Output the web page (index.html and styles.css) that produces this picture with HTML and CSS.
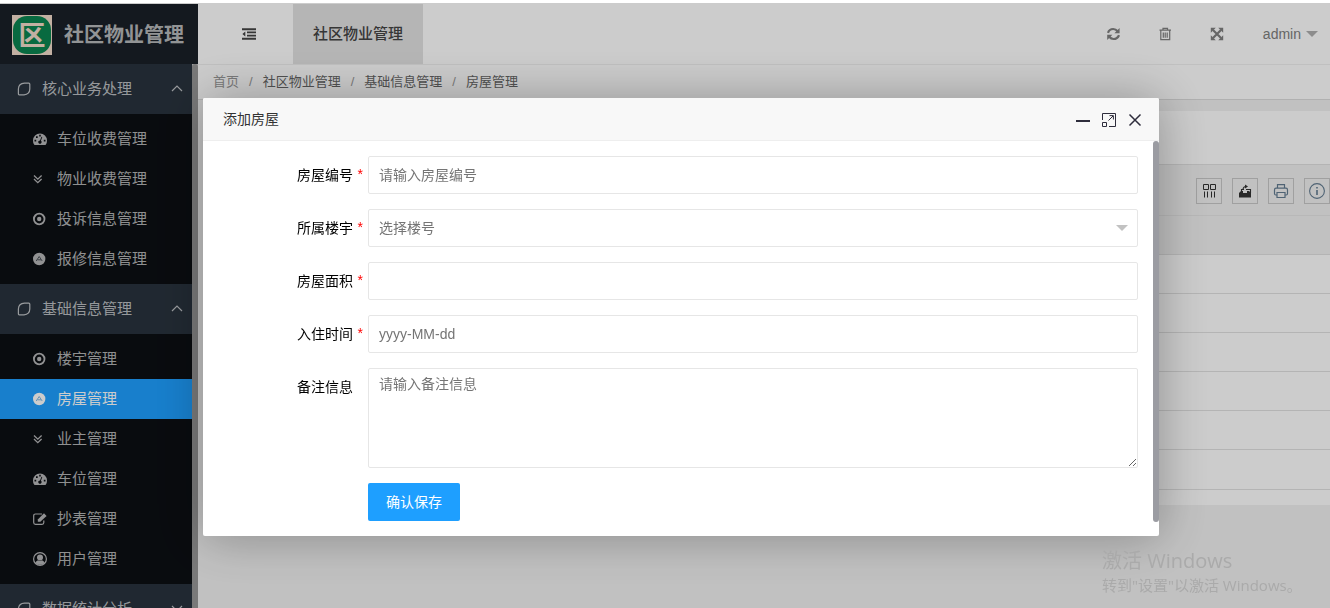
FILE: index.html
```html
<!DOCTYPE html>
<html lang="zh-CN">
<head>
<meta charset="utf-8">
<title>社区物业管理</title>
<link rel="stylesheet" href="styles.css">
</head>
<body>
<svg class="sprite" aria-hidden="true">
  <symbol id="leaf" viewBox="0 0 14 14"><path d="M2.200 12.800Q1.400 12.800 1.400 12V7Q1.600 1.500 7.500 1.200H11.800Q12.800 1.200 12.800 2.200V7Q12.600 12.500 7 12.800Z" fill="none" stroke="currentColor" stroke-width="1.200"/></symbol>
  <symbol id="up" viewBox="0 0 12 8"><path d="M1 6L6 1L11 6" fill="none" stroke="currentColor" stroke-width="1.200"/></symbol>
  <symbol id="down" viewBox="0 0 12 8"><path d="M1 1L6 6L11 1" fill="none" stroke="currentColor" stroke-width="1.200"/></symbol>
  <symbol id="gauge" viewBox="0 0 14 14"><path fill="currentColor" fill-rule="evenodd" d="M7 1.500A7 7 0 0 0 0 8.500Q0 11 1.100 12.600Q1.300 13 1.700 13H12.300Q12.700 13 12.900 12.600Q14 11 14 8.500A7 7 0 0 0 7 1.500ZM1.500 7.800h1.700v1.700H1.500ZM3 4.200h1.700v1.700H3ZM6.200 2.700h1.600v1.700H6.200ZM10.800 7.800h1.700v1.700h-1.700ZM8.500 4.700L9.300 5L7.900 8.700A1.700 1.700 0 1 1 7 8.400Z"/></symbol>
  <symbol id="dbl" viewBox="0 0 14 14"><path d="M1 3.500L4.800 7.200L8.600 3.500M1 7L4.800 10.700L8.600 7" fill="none" stroke="currentColor" stroke-width="1.300"/></symbol>
  <symbol id="dot" viewBox="0 0 14 14"><circle cx="6.200" cy="7" r="5.300" fill="none" stroke="currentColor" stroke-width="1.800"/><circle cx="6.200" cy="7" r="2.200" fill="currentColor"/></symbol>
  <symbol id="disc" viewBox="0 0 14 14"><circle cx="6.200" cy="7" r="6.200" fill="currentColor"/><path d="M3.200 9L6.200 4.500L9.200 9M4.400 7.800H8" fill="none" stroke="#4b5258" stroke-width="1"/></symbol>
  <symbol id="disc-on" viewBox="0 0 14 14"><circle cx="6.200" cy="7" r="6.200" fill="currentColor"/><path d="M3.200 9L6.200 4.500L9.200 9M4.400 7.800H8" fill="none" stroke="#7fb9e4" stroke-width="1"/></symbol>
  <symbol id="edit" viewBox="0 0 14 14"><path d="M9 2H2.500Q.7 2 .7 3.800V10.500Q.7 12.300 2.500 12.300H9Q10.800 12.300 10.800 10.500V8.500" fill="none" stroke="currentColor" stroke-width="1.200"/><path d="M4.800 9.800V7.400L11 1.300L13.600 3.900L7.300 9.800Z" fill="currentColor"/></symbol>
  <symbol id="user" viewBox="0 0 14 14"><circle cx="7" cy="7" r="6.400" fill="none" stroke="currentColor" stroke-width="1.200"/><circle cx="7" cy="5.400" r="3" fill="currentColor"/><path d="M2.400 11Q3 8.600 5 8.200Q7 9.500 9 8.200Q11 8.600 11.600 11Q7 14.500 2.400 11Z" fill="currentColor"/></symbol>
  <symbol id="indent" viewBox="0 0 14 14"><path d="M0 2.200H14M5 5.400H14M5 8.600H14M0 11.800H14" stroke="currentColor" stroke-width="1.900"/><path d="M3.300 4.500V9.500L.4 7Z" fill="currentColor"/></symbol>
  <symbol id="refresh" viewBox="0 0 14 14"><path d="M2 5.800Q3.200 2 7.200 2Q9.800 2 11.600 4.200M13 8.200Q11.500 12 7.500 12Q5 12 3.200 9.800" fill="none" stroke="currentColor" stroke-width="2.200"/><path d="M13.600 1V6.200H8.400ZM1.200 13V7.800H6.400Z" fill="currentColor"/></symbol>
  <symbol id="trash" viewBox="0 0 14 14"><path d="M1.500 3.200H13M5 3V1.300H9.500V3M2.800 3.500V12.600H11.700V3.500M5.300 5.500V10.800M7.200 5.500V10.800M9.200 5.500V10.800" fill="none" stroke="currentColor" stroke-width="1.200"/></symbol>
  <symbol id="arrows" viewBox="0 0 14 14"><path d="M3 3L11 11M11 3L3 11" stroke="currentColor" stroke-width="2.200"/><path d="M.8 .8H5.800L.8 5.800ZM13.200 .8V5.800L8.200 .8ZM.8 13.200V8.200L5.800 13.200ZM13.200 13.200H8.200L13.200 8.200Z" fill="currentColor"/></symbol>
  <symbol id="caret" viewBox="0 0 12 6"><path d="M0 0H12L6 6Z" fill="currentColor"/></symbol>
  <symbol id="min" viewBox="0 0 14 14"><path d="M0 8H14" stroke="currentColor" stroke-width="2"/></symbol>
  <symbol id="max" viewBox="0 0 14 14"><path d="M.5 7V.5H13.500V13.500H7M.5 9.500H4.500V13.500H.5ZM6.500 7.500L11 3M7.500 2.600H11.400V6.500" fill="none" stroke="currentColor" stroke-width="1"/></symbol>
  <symbol id="close" viewBox="0 0 14 14"><path d="M1.500 1.500L12.500 12.500M12.500 1.500L1.500 12.500" stroke="currentColor" stroke-width="1.500"/></symbol>
  <symbol id="cols" viewBox="0 0 16 16"><path d="M2.500 1.500H7.500V6.500H2.500ZM9.500 1.500H14.500V6.500H9.500ZM3.500 8.500V14.500M6.500 8.500V14.500M10.500 8.500V14.500M13.500 8.500V14.500" fill="none" stroke="currentColor" stroke-width="1"/></symbol>
  <symbol id="export" viewBox="0 0 16 16"><path d="M2 10H14V14.500H2ZM2 10L4 8H6V10ZM10 10V8H12L14 10Z" fill="currentColor"/><path d="M4.500 9.500V6.500H7M9 6.500H13.500V10M6 6Q6.500 3.500 9 3.500" fill="none" stroke="currentColor" stroke-width="1.100"/><path d="M8 1.500L11 3.500L8 5.500Z" fill="currentColor"/></symbol>
  <symbol id="print" viewBox="0 0 16 16"><path d="M4.500 5V1.700H11.500V5M4 12H2.800Q1.500 12 1.500 10.500V7Q1.500 5.200 3 5.200H13Q14.500 5.200 14.500 7V10.500Q14.500 12 13.200 12H12M4 9.500H12V14.500H4Z" fill="none" stroke="currentColor" stroke-width="1.200"/></symbol>
  <symbol id="info" viewBox="0 0 16 16"><circle cx="8" cy="8" r="7.400" fill="none" stroke="currentColor" stroke-width="1.100"/><path d="M8 4V5.600M8 7V12" stroke="currentColor" stroke-width="1.600"/></symbol>
</svg>

<div class="app">
  <nav class="side">
    <div class="brand">
      <svg class="brand-logo" viewBox="0 0 40 40" aria-hidden="true">
        <rect width="40" height="40" fill="#f3dccb"/>
        <rect x="1" y="1" width="38" height="38" rx="14" fill="#0b8550"/>
        <text class="seal" x="20" y="30" text-anchor="middle">区</text>
      </svg>
      <h1 class="brand-name">社区物业管理</h1>
    </div>
    <div class="menu-wrap">
      <div class="menu">
        <button class="group"><svg class="i14"><use href="#leaf"/></svg><span>核心业务处理</span><svg class="chev"><use href="#up"/></svg></button>
        <div class="items">
          <a href="#"><svg class="i14"><use href="#gauge"/></svg>车位收费管理</a>
          <a href="#"><svg class="i14"><use href="#dbl"/></svg>物业收费管理</a>
          <a href="#"><svg class="i14"><use href="#dot"/></svg>投诉信息管理</a>
          <a href="#"><svg class="i14"><use href="#disc"/></svg>报修信息管理</a>
        </div>
        <button class="group"><svg class="i14"><use href="#leaf"/></svg><span>基础信息管理</span><svg class="chev"><use href="#up"/></svg></button>
        <div class="items">
          <a href="#"><svg class="i14"><use href="#dot"/></svg>楼宇管理</a>
          <a href="#" class="on"><svg class="i14"><use href="#disc-on"/></svg>房屋管理</a>
          <a href="#"><svg class="i14"><use href="#dbl"/></svg>业主管理</a>
          <a href="#"><svg class="i14"><use href="#gauge"/></svg>车位管理</a>
          <a href="#"><svg class="i14"><use href="#edit"/></svg>抄表管理</a>
          <a href="#"><svg class="i14"><use href="#user"/></svg>用户管理</a>
        </div>
        <button class="group"><svg class="i14"><use href="#leaf"/></svg><span>数据统计分析</span><svg class="chev"><use href="#down"/></svg></button>
      </div>
      <div class="side-bar"></div>
    </div>
  </nav>

  <main class="main">
    <header class="top">
      <button class="fold" aria-label="收起菜单"><svg class="i14"><use href="#indent"/></svg></button>
      <a class="tab" href="#">社区物业管理</a>
      <div class="tools">
        <button aria-label="刷新"><svg class="i14"><use href="#refresh"/></svg></button>
        <button aria-label="清理"><svg class="i14"><use href="#trash"/></svg></button>
        <button aria-label="全屏"><svg class="i14"><use href="#arrows"/></svg></button>
      </div>
      <button class="account">admin<svg class="caret"><use href="#caret"/></svg></button>
    </header>
    <div class="crumbs">
      <a class="home" href="#">首页</a><span>/</span><a href="#">社区物业管理</a><span>/</span><a href="#">基础信息管理</a><span>/</span><a href="#">房屋管理</a>
    </div>
    <div class="content">
      <div class="filter"></div>
      <div class="toolbar">
        <button aria-label="筛选列"><svg class="i16"><use href="#cols"/></svg></button>
        <button aria-label="导出"><svg class="i16"><use href="#export"/></svg></button>
        <button class="blue" aria-label="打印"><svg class="i16"><use href="#print"/></svg></button>
        <button class="blue" aria-label="提示"><svg class="i16"><use href="#info"/></svg></button>
      </div>
      <table class="grid">
        <thead><tr><th></th></tr></thead>
        <tbody><tr><td></td></tr><tr><td></td></tr><tr><td></td></tr><tr><td></td></tr><tr><td></td></tr><tr><td></td></tr></tbody>
      </table>
    </div>
  </main>
</div>

<div class="shade"></div>

<section class="dialog" role="dialog" aria-labelledby="dlg-title">
  <div class="dialog-head">
    <h2 id="dlg-title">添加房屋</h2>
    <button aria-label="最小化"><svg class="i14"><use href="#min"/></svg></button>
    <button aria-label="最大化"><svg class="i14"><use href="#max"/></svg></button>
    <button aria-label="关闭"><svg class="i14"><use href="#close"/></svg></button>
  </div>
  <div class="dialog-body">
    <form class="form">
      <div class="row"><label for="no">房屋编号</label><b>*</b><input id="no" type="text" placeholder="请输入房屋编号"></div>
      <div class="row"><label for="building">所属楼宇</label><b>*</b><div class="pick"><select id="building"><option>选择楼号</option></select><svg class="caret"><use href="#caret"/></svg></div></div>
      <div class="row"><label for="area">房屋面积</label><b>*</b><input id="area" type="text"></div>
      <div class="row"><label for="date">入住时间</label><b>*</b><input id="date" type="text" placeholder="yyyy-MM-dd"></div>
      <div class="row"><label for="note">备注信息</label><b></b><textarea id="note" placeholder="请输入备注信息"></textarea></div>
      <div class="row"><button class="save" type="button">确认保存</button></div>
    </form>
    <div class="dialog-bar"></div>
  </div>
</section>

<div class="notice"><p class="notice-title">激活 Windows</p><p>转到"设置"以激活 Windows。</p></div>
</body>
</html>
```
FILE: styles.css
```css
* { box-sizing: border-box; }
body {
  margin: 0;
  font: 14px/20px "Liberation Sans", "Noto Sans CJK SC", sans-serif;
  color: #333;
  background: #f2f2f2;
}
h1, h2, p { margin: 0; }
a { color: inherit; text-decoration: none; }
button { border: 0; padding: 0; background: none; font: inherit; color: inherit; cursor: pointer; }
svg { display: block; flex: none; }
.sprite { position: absolute; width: 0; height: 0; }
.i14 { width: 14px; height: 14px; }
.i16 { width: 16px; height: 16px; }
.caret { width: 12px; height: 6px; }

.app { display: flex; height: 100vh; overflow: hidden; border-top: 4px solid #fff; }

/* sidebar */
.side { display: flex; flex-direction: column; flex: none; width: 198px; background: #0c0f13; color: rgba(255, 255, 255, .7); }
.brand { display: flex; align-items: center; gap: 12px; flex: none; height: 60px; padding: 2px 0 0 12px; background: #192027; }
.brand-logo { width: 40px; height: 40px; }
.seal { font: 700 27px "Noto Sans CJK SC", sans-serif; fill: #f3dccb; }
.brand-name { font-size: 20px; line-height: 28px; font-weight: bold; white-space: nowrap; }
.menu-wrap { display: flex; flex: 1; min-height: 0; background: #c8c8c8; }
.menu { flex: 1; overflow: hidden; background: #0c0f13; font-size: 15px; }
.side-bar { width: 6px; border-radius: 3px 3px 0 0; background: #989898; }
.group { display: flex; align-items: center; gap: 11px; width: 100%; height: 50px; padding: 0 9px 0 17px; background: #29333e; text-align: left; }
.group span { flex: 1; }
.chev { width: 12px; height: 8px; }
.items { padding: 5px 0; }
.items a { display: flex; align-items: center; gap: 10px; height: 40px; padding-left: 33px; }
.items .on { background: #1e9fff; color: #fff; }

/* page header */
.main { flex: 1; min-width: 0; }
.top { display: flex; height: 61px; border-bottom: 1px solid #f0f0f0; background: #fff; color: #808080; }
.fold { display: flex; align-items: center; width: 95px; padding-left: 44px; color: #444; }
.tab { display: flex; align-items: center; padding: 0 20px; background: #e3e3e3; color: #444; font-size: 15px; font-weight: 500; }
.tools { display: flex; margin-left: auto; }
.tools button { display: flex; align-items: center; justify-content: center; width: 52px; }
.account { display: flex; align-items: center; gap: 5px; padding: 0 12px 0 20px; }
.account .caret { color: #b0b0b0; }
.crumbs { display: flex; align-items: center; gap: 10px; height: 35px; padding-left: 15px; border-bottom: 1px solid #dcdcdc; background: #fff; color: #666; font-size: 13px; }
.crumbs .home, .crumbs span { color: #999; }

/* list page */
.content { padding: 11px 0 0 10px; }
.filter { height: 54px; border-bottom: 1px solid #e2e2e2; background: #fff; }
.toolbar { display: flex; justify-content: flex-end; align-items: center; gap: 10px; height: 51px; padding-top: 2px; border-bottom: 1px solid #e6e6e6; }
.toolbar button { display: flex; align-items: center; justify-content: center; width: 26px; height: 26px; border: 1px solid #c8c8c8; color: #333; }
.toolbar .blue { color: #637c91; }
.grid { width: 100%; border-collapse: separate; border-spacing: 0; border-bottom: 15px solid #fff; }
.grid th, .grid td { height: 39px; padding: 0; border-bottom: 1px solid #e2e2e2; }
.grid td { background: #fff; }
.grid tr:last-child td { height: 40px; }

.shade { position: fixed; inset: 3px 0 0; background: rgba(0, 0, 0, .2); }

/* dialog */
.dialog { position: fixed; top: 98px; left: 203px; right: 171px; border-radius: 2px; background: #fff; box-shadow: 1px 1px 50px rgba(0, 0, 0, .3); }
.dialog-head { display: flex; align-items: center; height: 43px; padding: 0 11px 0 20px; border-bottom: 1px solid #eee; border-radius: 2px 2px 0 0; background: #f8f8f8; }
.dialog-head h2 { flex: 1; font-size: 14px; font-weight: normal; }
.dialog-head button { display: flex; align-items: center; justify-content: center; width: 26px; height: 28px; padding-top: 2px; color: #2e2d3c; }
.dialog-body { display: flex; }
.dialog-bar { width: 6px; margin-bottom: 14px; border-radius: 3px; background: #9b9ca2; }
.form { display: flex; flex: 1; flex-direction: column; gap: 15px; padding: 15px; }
.row { display: grid; grid-template-columns: 135px 15px 1fr; }
.row label { padding-top: 9px; color: #000; text-align: right; }
.row b { padding: 8px 5px 0 0; color: #f00; font-weight: normal; text-align: right; }
.row input, .row select, .row textarea {
  display: block;
  width: 100%;
  height: 38px;
  margin: 0;
  padding: 0 10px;
  border: 1px solid #e6e6e6;
  border-radius: 2px;
  background: #fff;
  color: #757575;
  font: inherit;
}
.row ::placeholder { color: #757575; }
.row select { appearance: none; }
.row textarea { height: 100px; padding: 5px 10px; resize: vertical; }
.pick { display: grid; align-items: center; }
.pick > * { grid-area: 1 / 1; }
.pick .caret { justify-self: end; margin-right: 10px; color: #c2c2c2; pointer-events: none; }
.save { grid-column: 3; justify-self: start; height: 38px; padding: 0 18px; border-radius: 2px; background: #1e9fff; color: #fff; }

.notice { position: fixed; right: 28px; bottom: 12px; width: 200px; color: #aaa; font: 15px/22px "Open Sans", "Noto Sans CJK SC", sans-serif; white-space: nowrap; }
.notice-title { font-size: 20px; line-height: 26px; }
```
